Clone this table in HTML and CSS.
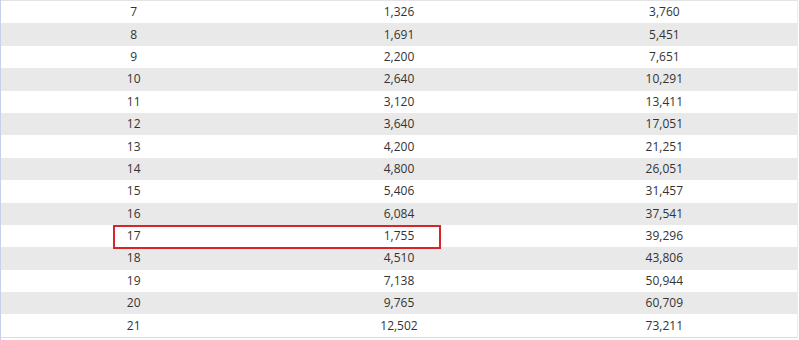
FILE: index.html
```html
<!DOCTYPE html>
<html lang="en">
<head>
  <meta charset="UTF-8">
  <title>Level table</title>
  <link rel="stylesheet" href="styles.css">
</head>
<body>
<div class="frame">
  <div class="levels">
    <div class="row"><span>7</span><span>1,326</span><span>3,760</span></div>
    <div class="row"><span>8</span><span>1,691</span><span>5,451</span></div>
    <div class="row"><span>9</span><span>2,200</span><span>7,651</span></div>
    <div class="row"><span>10</span><span>2,640</span><span>10,291</span></div>
    <div class="row"><span>11</span><span>3,120</span><span>13,411</span></div>
    <div class="row"><span>12</span><span>3,640</span><span>17,051</span></div>
    <div class="row"><span>13</span><span>4,200</span><span>21,251</span></div>
    <div class="row"><span>14</span><span>4,800</span><span>26,051</span></div>
    <div class="row"><span>15</span><span>5,406</span><span>31,457</span></div>
    <div class="row"><span>16</span><span>6,084</span><span>37,541</span></div>
    <div class="row is-marked"><span>17</span><span>1,755</span><span>39,296</span><i class="mark"></i></div>
    <div class="row"><span>18</span><span>4,510</span><span>43,806</span></div>
    <div class="row"><span>19</span><span>7,138</span><span>50,944</span></div>
    <div class="row"><span>20</span><span>9,765</span><span>60,709</span></div>
    <div class="row"><span>21</span><span>12,502</span><span>73,211</span></div>
  </div>
</div>
</body>
</html>
```

FILE: styles.css
```css
*{ margin: 0; padding: 0; box-sizing: border-box;}
body{ font-family: "Open Sans","Segoe UI",Arial,sans-serif; font-size: 12px; color: #333; background: #fff;}
.frame{ width: 800px; height: 340px; border-left: 1px solid #c5d3ea; border-right: 1px solid #c5d3ea; padding-right: 1px; overflow: hidden;}
.levels{ border-top: 1px solid #e3e3e3; border-bottom: 1px solid #dcdcdc; border-right: 1px solid #ececec;}
.levels .row{ position: relative; display: grid; grid-template-columns: repeat(3, 1fr); height: 22.4px; align-items: center; text-align: center;}
.levels .row:nth-child(even){ background: #e9e9e9;}
.levels .row span{ line-height: 22px;}
.levels .row.is-marked{ z-index: 1;}
.mark{ position: absolute; left: 112px; top: 0; width: 328px; height: 24px; border: 2px solid #d8252b;}
```
